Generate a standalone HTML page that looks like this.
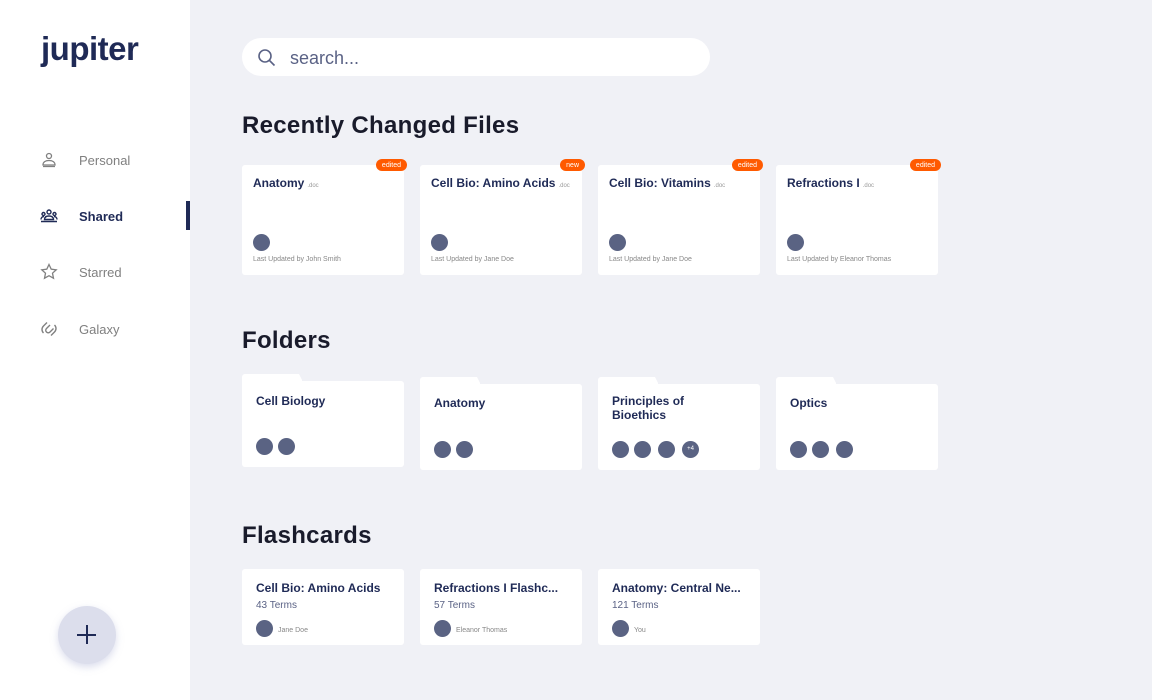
<!DOCTYPE html>
<html><head><meta charset="utf-8"><style>
*{margin:0;padding:0;box-sizing:border-box}
body{width:1152px;height:700px;background:#f0f1f6;font-family:"Liberation Sans",sans-serif;position:relative;overflow:hidden}
.side{position:absolute;left:0;top:0;width:190px;height:700px;background:#fff}
.logo{position:absolute;left:41px;top:30px;font-size:33px;font-weight:bold;color:#1f2a56;letter-spacing:-0.5px}
.nav{position:absolute;left:40px;font-size:13px;color:#808080;display:flex;align-items:center}
.nav svg{width:18px;height:18px;margin-right:21px}
.nav.act{color:#1f2a56;font-weight:bold}
.bar{position:absolute;left:186px;top:201px;width:4px;height:29px;background:#1f2a56}
.plus{position:absolute;left:58px;top:606px;width:58px;height:58px;border-radius:50%;background:#dcdeec;box-shadow:0 3px 8px rgba(150,155,200,.35)}
.plus:before{content:"";position:absolute;left:19px;top:28px;width:19px;height:2px;background:#1f2a56}
.plus:after{content:"";position:absolute;left:28px;top:19px;width:2px;height:19px;background:#1f2a56}
.search{position:absolute;left:242px;top:38px;width:468px;height:38px;background:#fff;border-radius:19px}
.search span{position:absolute;left:48px;top:10px;font-size:18px;color:#5a6285}
h2{position:absolute;left:242px;font-size:24px;color:#191b2b;font-weight:bold;letter-spacing:0.3px}
.card{position:absolute;width:162px;background:#fff;border-radius:3px}
.t{position:absolute;left:11px;font-size:12px;font-weight:bold;color:#1f2a56}
.t small{font-size:6px;color:#999;font-weight:normal;margin-left:3px}
.badge{position:absolute;right:-3px;top:-6px;background:#ff5a00;color:#fff;font-size:7px;padding:0 6px;height:12px;line-height:13px;border-radius:6px}
.av{position:absolute;width:17px;height:17px;border-radius:50%;background:#5a6383;color:#fff;font-size:6px;text-align:center;line-height:17px}
.meta{position:absolute;left:11px;font-size:7px;color:#888}
.tab{position:absolute;left:0;width:60px;height:10px}
.terms{position:absolute;left:14px;top:31px;font-size:10px;color:#5a6285}
</style></head><body>
<div class="side">
<div class="logo">jupiter</div>
<div class="nav" style="top:151px"><svg viewBox="0 0 18 18" fill="none" stroke="#808080" stroke-width="1.3"><circle cx="9" cy="5" r="2.5"/><path d="M3 14c0-3 2.5-4.5 6-4.5s6 1.5 6 4.5zM3 15.5h12"/></svg>Personal</div>
<div class="nav act" style="top:207px"><svg viewBox="0 0 18 18" fill="none" stroke="#1f2a56" stroke-width="1.4"><circle cx="9" cy="5" r="2"/><circle cx="3.5" cy="7" r="1.5"/><circle cx="14.5" cy="7" r="1.5"/><path d="M1 12.5c0-2 1.5-3 3-3M17 12.5c0-2-1.5-3-3-3M4.5 12.5c0-2.5 2-3.5 4.5-3.5s4.5 1 4.5 3.5zM1 14.5h16"/></svg>Shared</div>
<div class="bar"></div>
<div class="nav" style="top:263px"><svg viewBox="0 0 18 18" fill="none" stroke="#808080" stroke-width="1.3"><path d="M9 1.5l2.2 4.7 5 .6-3.7 3.4 1 5-4.5-2.5-4.5 2.5 1-5L1.8 6.8l5-.6z"/></svg>Starred</div>
<div class="nav" style="top:320px"><svg viewBox="0 0 18 18" fill="none" stroke="#808080" stroke-width="1.4"><path d="M7 2.5L3.5 6c-2 2-2 5 0 7M10 5l-3.5 3.5c-1 1-1 2.5 0 3.5s2.5 1 3.5 0L13.5 8.5M11 15.5l3.5-3.5c2-2 2-5 0-7"/></svg>Galaxy</div>
<div class="plus"></div>
</div>

<div class="search"><svg style="position:absolute;left:15px;top:10px" width="20" height="20" viewBox="0 0 20 20" fill="none" stroke="#5a6285" stroke-width="1.6"><circle cx="8" cy="8" r="6"/><path d="M12.5 12.5l5 5"/></svg><span>search...</span></div>

<h2 style="top:112px">Recently Changed Files</h2>
<div class="card" style="left:242px;top:165px;height:110px"><div class="badge">edited</div><div class="t" style="top:11px">Anatomy<small>.doc</small></div><div class="av" style="left:11px;top:69px"></div><div class="meta" style="top:91px">Last Updated by John Smith</div></div>
<div class="card" style="left:420px;top:165px;height:110px"><div class="badge">new</div><div class="t" style="top:11px">Cell Bio: Amino Acids<small>.doc</small></div><div class="av" style="left:11px;top:69px"></div><div class="meta" style="top:91px">Last Updated by Jane Doe</div></div>
<div class="card" style="left:598px;top:165px;height:110px"><div class="badge">edited</div><div class="t" style="top:11px">Cell Bio: Vitamins<small>.doc</small></div><div class="av" style="left:11px;top:69px"></div><div class="meta" style="top:91px">Last Updated by Jane Doe</div></div>
<div class="card" style="left:776px;top:165px;height:110px"><div class="badge">edited</div><div class="t" style="top:11px">Refractions I<small>.doc</small></div><div class="av" style="left:11px;top:69px"></div><div class="meta" style="top:91px">Last Updated by Eleanor Thomas</div></div>

<h2 style="top:327px">Folders</h2>
<div class="card" style="left:242px;top:381px;height:86px"><svg class="tab" style="top:-7px" viewBox="0 0 60 10"><path d="M0 10V3a3 3 0 013-3h54l4 8v2z" fill="#fff"/></svg><div class="t" style="top:13px;left:14px">Cell Biology</div><div class="av" style="left:14px;top:57px"></div><div class="av" style="left:36px;top:57px"></div></div>
<div class="card" style="left:420px;top:384px;height:86px"><svg class="tab" style="top:-7px" viewBox="0 0 60 10"><path d="M0 10V3a3 3 0 013-3h54l4 8v2z" fill="#fff"/></svg><div class="t" style="top:12px;left:14px">Anatomy</div><div class="av" style="left:14px;top:57px"></div><div class="av" style="left:36px;top:57px"></div></div>
<div class="card" style="left:598px;top:384px;height:86px"><svg class="tab" style="top:-7px" viewBox="0 0 60 10"><path d="M0 10V3a3 3 0 013-3h54l4 8v2z" fill="#fff"/></svg><div class="t" style="top:10px;left:14px;line-height:14px">Principles of<br>Bioethics</div><div class="av" style="left:14px;top:57px"></div><div class="av" style="left:36px;top:57px"></div><div class="av" style="left:60px;top:57px"></div><div class="av" style="left:84px;top:57px">+4</div></div>
<div class="card" style="left:776px;top:384px;height:86px"><svg class="tab" style="top:-7px" viewBox="0 0 60 10"><path d="M0 10V3a3 3 0 013-3h54l4 8v2z" fill="#fff"/></svg><div class="t" style="top:12px;left:14px">Optics</div><div class="av" style="left:14px;top:57px"></div><div class="av" style="left:36px;top:57px"></div><div class="av" style="left:60px;top:57px"></div></div>

<h2 style="top:522px">Flashcards</h2>
<div class="card" style="left:242px;top:569px;height:76px"><div class="t" style="top:12px;left:14px">Cell Bio: Amino Acids</div><div class="terms">43 Terms</div><div class="av" style="left:14px;top:51px"></div><div class="meta" style="left:36px;top:58px">Jane Doe</div></div>
<div class="card" style="left:420px;top:569px;height:76px"><div class="t" style="top:12px;left:14px">Refractions I Flashc...</div><div class="terms">57 Terms</div><div class="av" style="left:14px;top:51px"></div><div class="meta" style="left:36px;top:58px">Eleanor Thomas</div></div>
<div class="card" style="left:598px;top:569px;height:76px"><div class="t" style="top:12px;left:14px">Anatomy: Central Ne...</div><div class="terms">121 Terms</div><div class="av" style="left:14px;top:51px"></div><div class="meta" style="left:36px;top:58px">You</div></div>
</body></html>
